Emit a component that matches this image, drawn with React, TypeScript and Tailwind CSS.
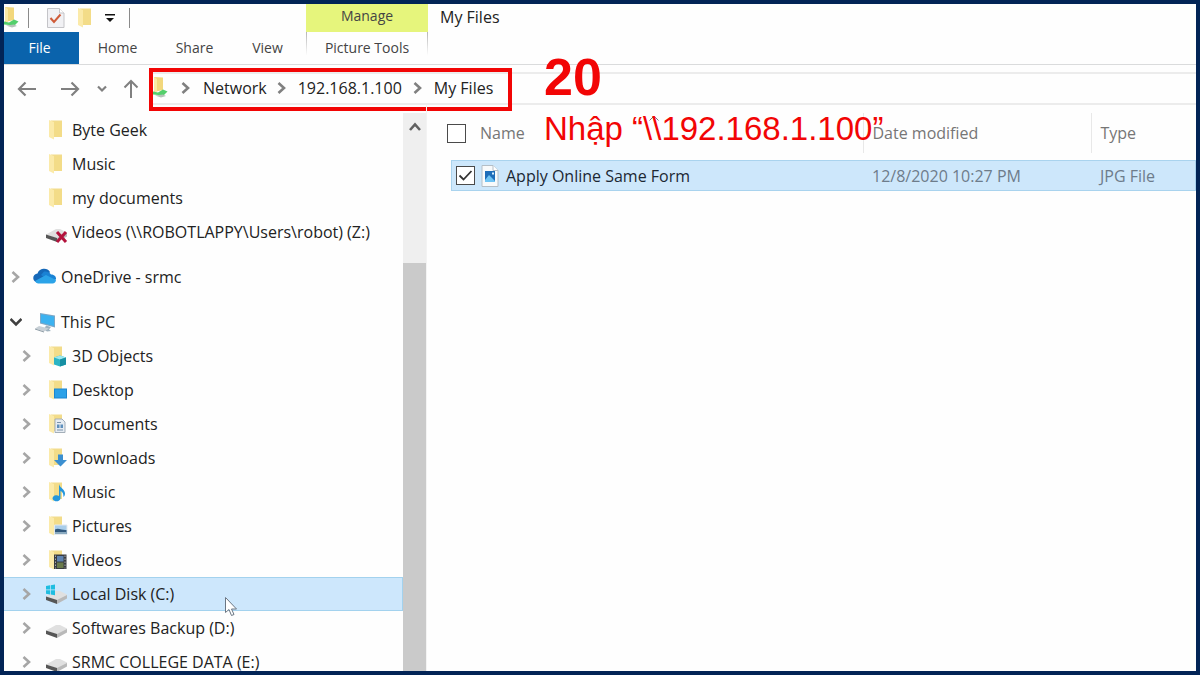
import type { ReactNode } from 'react';

type IconName =
    | 'folder'
    | 'netdrive'
    | 'onedrive'
    | 'pc'
    | 'objects'
    | 'desktop'
    | 'documents'
    | 'downloads'
    | 'music'
    | 'pictures'
    | 'videos'
    | 'windrive'
    | 'drive';

interface TreeItem {
    label: string;
    icon: IconName;
    level: 1 | 2;
    arrow?: 'open' | 'closed';
    selected?: boolean;
}

const groups: TreeItem[][] = [
    [
        { label: 'Byte Geek', icon: 'folder', level: 2 },
        { label: 'Music', icon: 'folder', level: 2 },
        { label: 'my documents', icon: 'folder', level: 2 },
        { label: 'Videos (\\\\ROBOTLAPPY\\Users\\robot) (Z:)', icon: 'netdrive', level: 2 },
    ],
    [{ label: 'OneDrive - srmc', icon: 'onedrive', level: 1, arrow: 'closed' }],
    [
        { label: 'This PC', icon: 'pc', level: 1, arrow: 'open' },
        { label: '3D Objects', icon: 'objects', level: 2, arrow: 'closed' },
        { label: 'Desktop', icon: 'desktop', level: 2, arrow: 'closed' },
        { label: 'Documents', icon: 'documents', level: 2, arrow: 'closed' },
        { label: 'Downloads', icon: 'downloads', level: 2, arrow: 'closed' },
        { label: 'Music', icon: 'music', level: 2, arrow: 'closed' },
        { label: 'Pictures', icon: 'pictures', level: 2, arrow: 'closed' },
        { label: 'Videos', icon: 'videos', level: 2, arrow: 'closed' },
        { label: 'Local Disk (C:)', icon: 'windrive', level: 2, arrow: 'closed', selected: true },
        { label: 'Softwares Backup (D:)', icon: 'drive', level: 2, arrow: 'closed' },
        { label: 'SRMC COLLEGE DATA (E:)', icon: 'drive', level: 2, arrow: 'closed' },
    ],
];

const Folder = () => (
    <>
        <path d="M7 2.500h11v16.500H9z" fill="#f2dc8c" />
        <path d="M5 2l5 2v17.500l-5-2.500z" fill="#fbeaa9" />
        <path d="M10 4h8v14.500l-8 .5z" fill="#f3dc88" />
    </>
);

const Drive = () => (
    <>
        <path d="M2 14.500l10-5.500h4l7 3.500v2l-10 4z" fill="#e0e0e0" />
        <path d="M2 14.500l11 3.500v4L2 18z" fill="#565656" />
        <path d="M13 18l10-5v3.500L13 22z" fill="#b9b9b9" />
    </>
);

const drawings: Record<IconName, ReactNode> = {
    folder: <Folder />,
    netdrive: (
        <>
            <Drive />
            <path d="M13 12l9 10M22 12l-9 10" stroke="#b3123c" strokeWidth="3" fill="none" />
        </>
    ),
    onedrive: (
        <>
            <path d="M5 17.500a4.500 4.500 0 0 1-.5-9A7 7 0 0 1 17 7l-7 10.500z" fill="#1568b8" />
            <path d="M11 6.500a7 6 0 0 1 7 3c3.500 0 5.500 2.500 5 5l-6 1.500-9-6z" fill="#1a82d4" />
            <path d="M2 16l11-6 10 5a4 4 0 0 1-3.500 3.500H5A4 4 0 0 1 2 16z" fill="#2ba3e8" />
        </>
    ),
    pc: (
        <>
            <path d="M7 3l15 2.500v12L7 13.500z" fill="#7ba7c7" />
            <path d="M8 4.300l13 2.200v9.500L8 12.500z" fill="#3cb2f0" />
            <path d="M13 15.500l5 1.500-2 2.500 2 1.500-4 .5-3-2z" fill="#9fb2bf" />
            <path d="M6 16l10 2.500-5 3-9-3z" fill="#c8d0d6" />
            <path d="M2 18.500l9 3v1l-9-3z" fill="#8b99a3" />
        </>
    ),
    objects: (
        <>
            <Folder />
            <path d="M10 13.500l6-2 6 2v7l-6 2-6-2z" fill="#2bb4c4" />
            <path d="M10 13.500l6-2 6 2-6 2z" fill="#9be7ee" />
            <path d="M16 15.500l6-2v7l-6 2z" fill="#168fa3" />
        </>
    ),
    desktop: (
        <>
            <Folder />
            <path d="M10 10.500h13v10H10z" fill="#1c86cf" />
            <path d="M11 11.500h11v8H11z" fill="#2ba1e8" />
        </>
    ),
    documents: (
        <>
            <Folder />
            <path d="M11 7h7l3 3v10.500H11z" fill="#e6ecf2" stroke="#a3aeb8" />
            <path d="M13 10.500h4M13 18h6" stroke="#7c93ab" />
            <path d="M13 12.500h2.500v3.500H13zM16.500 12.500H19V16h-2.500z" fill="#5e8fbc" />
        </>
    ),
    downloads: (
        <>
            <Folder />
            <path d="M14 8.500h5V14h4l-6.500 6.500L10 14h4z" fill="#3b8fd0" />
        </>
    ),
    music: (
        <>
            <Folder />
            <path
                d="M15 4c.5 4 6 5 6 9.500 0 1.500-.5 2.500-1.500 3.500 0-3-1-5.500-3-6v7.500a4 3 0 1 1-1.500-2.600z"
                fill="#2497dc"
            />
        </>
    ),
    pictures: (
        <>
            <Folder />
            <path d="M10.500 11h12.500v9.500H10.500z" fill="#a9cdea" stroke="#e3e9ee" />
            <path d="M11 15.500c4-2 6 1 11.500.5V20H11z" fill="#31587d" />
            <path d="M11 18h11.500v2H11z" fill="#8aaac0" />
        </>
    ),
    videos: (
        <>
            <Folder />
            <path d="M10 6.500h12.500V21H10z" fill="#393c42" />
            <path d="M13 8h6.500v5.500H13z" fill="#5f83b0" />
            <path d="M13 14.500h6.500V20H13z" fill="#6a7a4b" />
            <path d="M11.500 7.500v13M21 7.500v13" stroke="#a8a8a8" strokeDasharray="1.500 1.500" />
        </>
    ),
    windrive: (
        <>
            <Drive />
            <path
                d="M2 4l4-.7v4.200H2zM6.700 3.200l4.300-.7v5H6.700zM2 8.200h4v4.200l-4-.6zM6.700 8.200H11v5l-4.300-.7z"
                fill="#1fbde0"
            />
        </>
    ),
    drive: <Drive />,
};

function Chevron({ open = false, className = 'text-[#a6a6a6]' }: { open?: boolean; className?: string }) {
    return (
        <svg viewBox="0 0 12 12" className={`size-3 ${className}`} fill="none" stroke="currentColor" strokeWidth="2.600">
            <path d={open ? 'M0.500 3L6 8.500 11.500 3' : 'M2.500 1l5.500 5-5.500 5'} />
        </svg>
    );
}

function SharedFolder({ className }: { className: string }) {
    return (
        <svg viewBox="0 0 16 24" className={className}>
            <path d="M1 1l9 .5V14l-9 2z" fill="#f2d77c" />
            <path d="M1 1l3 2v13l-3-1z" fill="#fae9a6" />
            <path d="M0 15.500l5 1 5-3 4.500 2-4 4L0 18.500z" fill="#54cf6c" />
            <path d="M2 19.500l8-1 3 1.500-5 1.500z" fill="#b4c2b8" />
        </svg>
    );
}

function TreeRow({ item }: { item: TreeItem }) {
    return (
        <li>
            <a
                href="#"
                className={`flex h-[34px] items-center border-y ${item.level === 2 ? 'pl-[11px]' : ''} ${
                    item.selected ? 'border-r border-[#a3d2ee] bg-[#cde7fc]' : 'border-transparent'
                }`}
            >
                <span className="flex w-6 shrink-0 justify-center">
                    {item.arrow && (
                        <Chevron
                            open={item.arrow === 'open'}
                            className={item.arrow === 'open' ? 'text-[#404040]' : 'text-[#a6a6a6]'}
                        />
                    )}
                </span>
                <svg viewBox="0 0 24 24" className="ml-[5px] mr-1 size-6 shrink-0">
                    {drawings[item.icon]}
                </svg>
                <span className="whitespace-nowrap">{item.label}</span>
            </a>
        </li>
    );
}

function Ribbon() {
    return (
        <header className="border-b border-[#dadbdc] text-sm text-[#444]">
            <div className="flex h-7">
                <div className="flex w-[302px] items-center">
                    <SharedFolder className="h-6 w-4" />
                    <span className="ml-2 h-5 w-px bg-[#8a8a8a]" />
                    <button type="button" aria-label="Properties" className="ml-[18px]">
                        <svg viewBox="0 0 18 20" className="h-5 w-[18px]">
                            <path d="M.5.5h12l4.500 4.500v14.500H.5z" fill="#f1f1f4" stroke="#c4c4c8" />
                            <path d="M12.500.5V5H17" fill="#fff" stroke="#c4c4c8" />
                            <path d="M3.500 10l3.500 4 6.500-7.500" fill="none" stroke="#cf5b38" strokeWidth="2" />
                        </svg>
                    </button>
                    <button type="button" aria-label="New folder" className="ml-2">
                        <svg viewBox="0 0 24 24" className="size-6">
                            <Folder />
                        </svg>
                    </button>
                    <button type="button" aria-label="Customize toolbar" className="ml-2">
                        <svg viewBox="0 0 10 10" className="size-2.5">
                            <path d="M0 1h10v1.500H0zM1 5h8L5 9z" fill="#111" />
                        </svg>
                    </button>
                    <span className="ml-[14px] h-5 w-px bg-[#8a8a8a]" />
                </div>
                <button type="button" className="w-[122px] bg-[#e6f57c] pb-1">
                    Manage
                </button>
                <h1 className="pl-3 text-base leading-[26px] text-[#222]">My Files</h1>
            </div>
            <nav className="flex h-8">
                <button type="button" className="w-[75px] bg-[#0a63ac] pr-1 text-white">
                    File
                </button>
                <button type="button" className="w-[77px]">
                    Home
                </button>
                <button type="button" className="w-[77px]">
                    Share
                </button>
                <button type="button" className="w-[73px] pr-1">
                    View
                </button>
                <div className="flex w-[122px] justify-between">
                    <span className="h-6 w-px bg-linear-to-b from-[#b5b5b5] to-white" />
                    <button type="button">Picture Tools</button>
                    <span className="h-6 w-px bg-linear-to-b from-[#b5b5b5] to-white" />
                </div>
            </nav>
        </header>
    );
}

function AddressBar() {
    return (
        <div className="flex h-10 items-end">
            <div className="flex h-8 w-[145px] items-center text-[#808080]">
                <button type="button" aria-label="Back" className="ml-[13px]">
                    <svg viewBox="0 0 20 16" className="h-4 w-5" fill="none" stroke="currentColor" strokeWidth="2.200">
                        <path d="M19 8H3M8.500 1.500L2 8l6.500 6.500" />
                    </svg>
                </button>
                <button type="button" aria-label="Forward" className="ml-[23px]">
                    <svg viewBox="0 0 20 16" className="h-4 w-5" fill="none" stroke="currentColor" strokeWidth="2.200">
                        <path d="M1 8h16M11.500 1.500L18 8l-6.500 6.500" />
                    </svg>
                </button>
                <button type="button" aria-label="Recent locations" className="ml-[17px]">
                    <svg viewBox="0 0 10 10" className="size-2.5" fill="none" stroke="currentColor" strokeWidth="2.200">
                        <path d="M1 2.500L5 6.500l4-4" />
                    </svg>
                </button>
                <button type="button" aria-label="Up" className="ml-4">
                    <svg viewBox="0 0 16 20" className="h-5 w-4" fill="none" stroke="currentColor" strokeWidth="2">
                        <path d="M8 19V2M1.500 8.500L8 2l6.500 6.500" />
                    </svg>
                </button>
            </div>
            <div className="relative flex h-[33px] min-w-0 flex-1 items-center border-y-2 border-[#ececec] pb-px text-[#222]">
                <SharedFolder className="ml-1 h-6 w-4" />
                <span className="flex w-[34px] justify-center">
                    <Chevron className="text-[#808080]" />
                </span>
                <a href="#">Network</a>
                <span className="flex w-[31px] justify-center">
                    <Chevron className="text-[#808080]" />
                </span>
                <a href="#">192.168.1.100</a>
                <span className="flex w-8 justify-center">
                    <Chevron className="text-[#808080]" />
                </span>
                <a href="#">My Files</a>
                <div className="pointer-events-none absolute -top-1.5 left-0 h-[43px] w-[363px] border-4 border-[#f20505]" />
            </div>
        </div>
    );
}

function Sidebar() {
    return (
        <aside className="relative flex w-[422px] shrink-0 pt-2">
            <nav className="w-[399px] shrink-0 overflow-hidden text-[#222]">
                <div className="flex flex-col gap-[11px]">
                    {groups.map((group, i) => (
                        <ul key={i}>
                            {group.map((item) => (
                                <TreeRow key={item.label} item={item} />
                            ))}
                        </ul>
                    ))}
                </div>
            </nav>
            <div className="flex w-[23px] flex-col bg-[#efefef]">
                <button type="button" aria-label="Scroll up" className="flex h-[150px] justify-center pt-2">
                    <svg viewBox="0 0 12 12" className="size-3" fill="none" stroke="#606060" strokeWidth="2.600">
                        <path d="M1 9l5-5.500L11 9" />
                    </svg>
                </button>
                <div className="flex-1 bg-[#cacaca]" />
            </div>
            <svg viewBox="0 0 12 19" className="absolute left-[221px] top-[492px] h-[19px] w-3">
                <path d="M.5.500v15l3.500-3 2.500 6 2.500-1-2.500-5.500h5z" fill="#fff" stroke="#6b7683" />
            </svg>
        </aside>
    );
}

function Checkbox({ label, checked = false }: { label: string; checked?: boolean }) {
    return (
        <span className="relative flex size-[19px] shrink-0">
            <input
                type="checkbox"
                aria-label={label}
                defaultChecked={checked}
                className="peer size-full appearance-none border border-[#4a4a4a] bg-white"
            />
            <svg
                viewBox="0 0 19 19"
                className="pointer-events-none absolute inset-0 hidden peer-checked:block"
                fill="none"
                stroke="#333"
                strokeWidth="1.800"
            >
                <path d="M3.500 9.500l4 4L15.500 5" />
            </svg>
        </span>
    );
}

function FileList() {
    return (
        <main className="relative min-w-0 flex-1 border-l border-[#f3f3f3] pl-6 pt-2">
            <table className="w-full table-fixed border-collapse text-left">
                <colgroup>
                    <col className="w-[412px]" />
                    <col className="w-[228px]" />
                    <col />
                </colgroup>
                <thead className="text-[#767676]">
                    <tr className="h-10">
                        <th className="relative border-r border-[#e8e8e8] p-0 font-normal">
                            <div className="-ml-1 flex items-center">
                                <Checkbox label="Select all" />
                                <span className="pl-[14px]">Name</span>
                            </div>
                            <svg viewBox="0 0 10 6" className="absolute left-[198px] top-0.5 h-1.5 w-2.5" fill="none" stroke="#777">
                                <path d="M.5 5.500L5 1l4.500 4.500" />
                            </svg>
                        </th>
                        <th className="border-r border-[#e8e8e8] py-0 pl-[9px] font-normal">Date modified</th>
                        <th className="py-0 pl-[9px] font-normal">Type</th>
                    </tr>
                </thead>
                <tbody>
                    <tr className="h-[7px]">
                        <td colSpan={3} className="p-0" />
                    </tr>
                    <tr className="h-[31px] bg-[#cde7fb] text-[#6d7c8b] outline outline-offset-[-1px] outline-[#a9d3ee]">
                        <td className="p-0">
                            <div className="flex items-center pl-[5px] text-[#1c2733]">
                                <Checkbox label="Apply Online Same Form" checked />
                                <svg viewBox="0 0 18 22" className="ml-1.5 h-[22px] w-[18px]">
                                    <path d="M1 .5h11l5 5v16H1z" fill="#f8fafb" stroke="#b4bec6" />
                                    <path d="M12 .5v5h5" fill="#fff" stroke="#b4bec6" />
                                    <path d="M4 6h10v11H4z" fill="#1d6cb8" />
                                    <path d="M4 15l4-5 6 6v1H4z" fill="#6fc3f3" />
                                    <path d="M11 7.500h2v2h-2z" fill="#d5efff" />
                                </svg>
                                <span className="pl-[7px]">Apply Online Same Form</span>
                            </div>
                        </td>
                        <td className="py-0 pl-[9px]">12/8/2020 10:27 PM</td>
                        <td className="py-0 pl-[9px]">JPG File</td>
                    </tr>
                </tbody>
            </table>
        </main>
    );
}

export default function App() {
    return (
        <div className="relative flex h-screen flex-col overflow-hidden border-4 border-[#022456] bg-[#fefefe] font-['Open_Sans','Noto_Sans',sans-serif] text-base">
            <Ribbon />
            <AddressBar />
            <div className="flex min-h-0 flex-1">
                <Sidebar />
                <FileList />
            </div>
            <div className="pointer-events-none absolute left-[540px] top-[43px] font-['Liberation_Sans',Arial,sans-serif] text-[#f20505]">
                <p className="text-[52px] font-bold leading-[60px]">20</p>
                <p className="whitespace-nowrap text-[33px] leading-[44px]">Nhập “\\192.168.1.100”</p>
            </div>
        </div>
    );
}
